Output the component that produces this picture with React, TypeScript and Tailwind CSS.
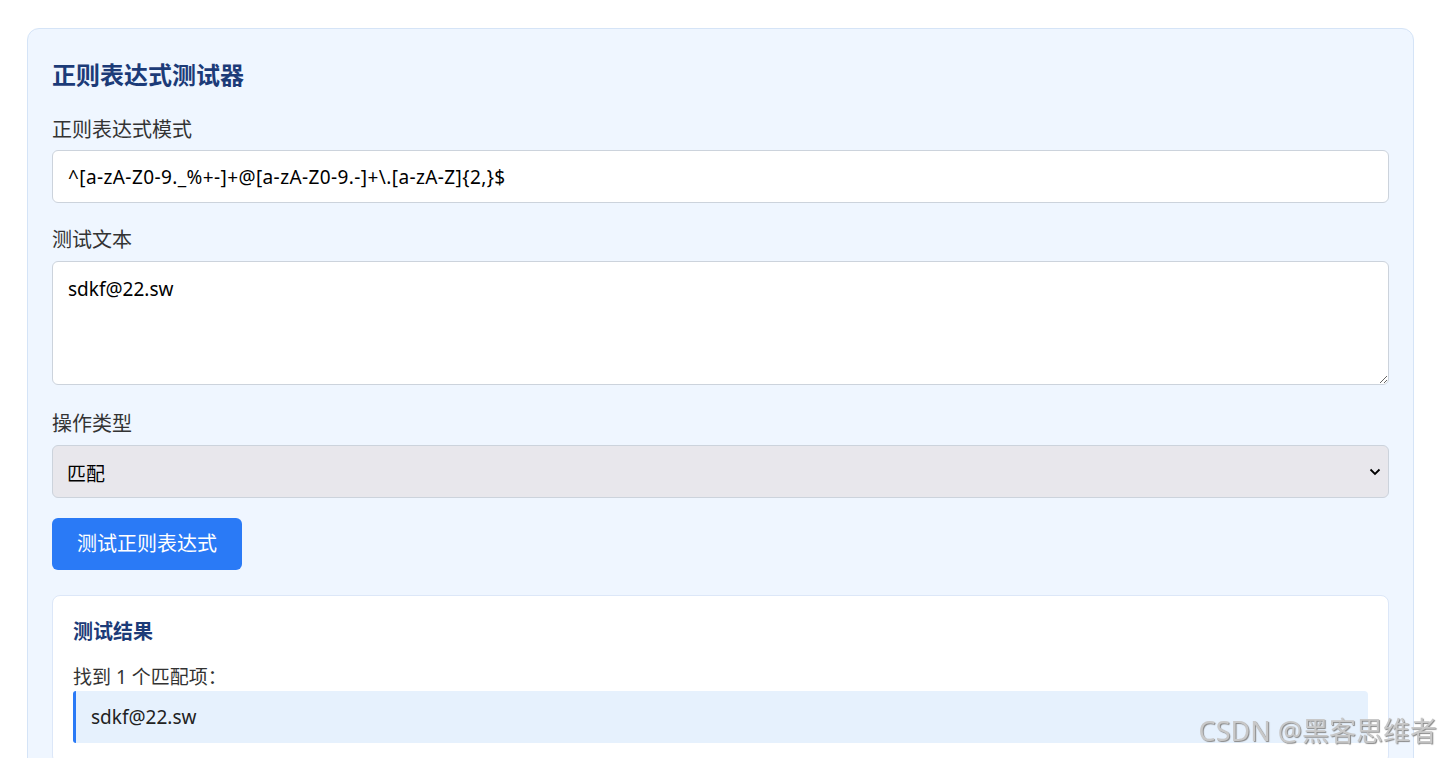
import { useState } from "react";

const font = { fontFamily: '"Noto Sans", "Noto Sans CJK SC", sans-serif' };

const RegexTester = () => {
  const [pattern, setPattern] = useState<string>("^[a-zA-Z0-9._%+-]+@[a-zA-Z0-9.-]+\\.[a-zA-Z]{2,}$");
  const [text, setText] = useState<string>("sdkf@22.sw");
  const [mode, setMode] = useState<string>("match");

  return (
    <div className="mx-[27px] mt-[28px] rounded-[12px] border border-[#d5e4f7] bg-[#eff6ff] px-[24px] pt-[30px] pb-[40px]">
      <h2 className="text-[24px] leading-[32px] font-bold text-[#1c3b78] mb-[26px]">正则表达式测试器</h2>

      <label className="block text-[20px] leading-[26px] text-[#333] mb-[7px]">正则表达式模式</label>
      <input
        value={pattern}
        onChange={(e) => setPattern(e.target.value)}
        className="block w-full h-[53px] rounded-[6px] border border-[#ccd3dc] bg-white px-[15px] text-[19px] tracking-[0.4px] text-black outline-none"
      />

      <label className="block text-[20px] leading-[26px] text-[#333] mt-[24px] mb-[8px]">测试文本</label>
      <textarea
        value={text}
        onChange={(e) => setText(e.target.value)}
        className="block w-full h-[124px] rounded-[6px] border border-[#ccd3dc] bg-white px-[15px] py-[14px] text-[19px] leading-[26px] text-black outline-none"
      />

      <label className="block text-[20px] leading-[26px] text-[#333] mt-[26px] mb-[8px]">操作类型</label>
      <div className="relative">
        <select
          value={mode}
          onChange={(e) => setMode(e.target.value)}
          className="block w-full h-[53px] appearance-none rounded-[6px] border border-[#ccd3dc] bg-[#e8e7ec] px-[14px] pt-[5px] text-[19px] text-black outline-none"
        >
          <option value="match">匹配</option>
          <option value="replace">替换</option>
        </select>
        <svg className="absolute right-[8px] top-[22px] pointer-events-none" width="12" height="10" viewBox="0 0 12 10">
          <path d="M1.5 2.5 L6 7 L10.5 2.5" fill="none" stroke="#000" strokeWidth="1.8" />
        </svg>
      </div>

      <button className="mt-[20px] h-[52px] w-[190px] rounded-[6px] bg-[#2a7af6] text-[20px] text-white">
        测试正则表达式
      </button>

      <div className="mt-[25px] rounded-[8px] border border-[#dce7f8] bg-white px-[20px] pt-[22px] pb-[20px]">
        <h3 className="text-[20px] leading-[28px] font-bold text-[#1c3b78] mb-[18px]">测试结果</h3>
        <p className="text-[19px] leading-[26px] text-[#333] mb-[1px]">找到 1 个匹配项：</p>
        <div className="h-[52px] flex items-center rounded-r-[4px] rounded-l-[3px] border-l-[3px] border-[#2a7af6] bg-[#e6f1fd] pl-[15px] text-[19px] text-[#222]">
          sdkf@22.sw
        </div>
      </div>
    </div>
  );
};

export default function App() {
  return (
    <div className="relative min-h-[758px] bg-white" style={font}>
      <RegexTester />
      <div className="fixed right-[4px] top-[713px] text-[27px] leading-[36px] text-[#c8c8c8] [text-shadow:1px_1px_1px_#888] pointer-events-none">
        CSDN @黑客思维者
      </div>
    </div>
  );
}
